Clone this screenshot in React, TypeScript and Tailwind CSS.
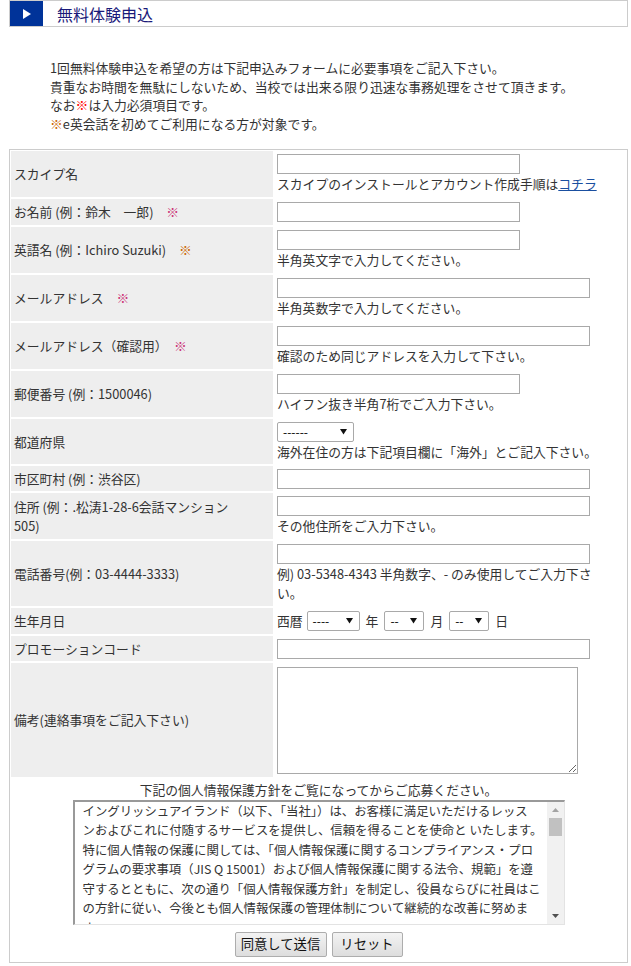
import type { ReactNode } from 'react';

const policyLines = [
  'イングリッシュアイランド（以下、「当社」）は、お客様に満足いただけるレッス',
  'ンおよびこれに付随するサービスを提供し、信頼を得ることを使命と いたします。',
  '特に個人情報の保護に関しては、「個人情報保護に関するコンプライアンス・プロ',
  'グラムの要求事項（JIS Q 15001）および個人情報保護に関する法令、規範」を遵',
  '守するとともに、次の通り「個人情報保護方針」を制定し、役員ならびに社員はこ',
  'の方針に従い、今後とも個人情報保護の管理体制について継続的な改善に努めま',
  'す。',
];

function Row({ label, children, className = 'py-[3px]' }: { label: ReactNode; children: ReactNode; className?: string }) {
  return (
    <>
      <div className="flex items-center bg-[#eeeeee] px-[3px] leading-[19px]">
        <div>{label}</div>
      </div>
      <div className={`bg-white px-[2px] ${className}`}>{children}</div>
    </>
  );
}

function Input({ long }: { long?: boolean }) {
  return (
    <input
      type="text"
      className={`block h-[20px] border border-[#a9a9a9] bg-white ${long ? 'w-[313px]' : 'w-[243px]'}`}
    />
  );
}

function Note({ children }: { children: ReactNode }) {
  return <div className="leading-[20px]">{children}</div>;
}

function Select({ text, width }: { text: string; width: string }) {
  return (
    <span
      className={`inline-flex h-[20px] ${width} items-center justify-between rounded-[2px] border border-[#a9a9a9] bg-white pl-[5px] pr-[6px] text-[12px] leading-none text-black`}
    >
      <span>{text}</span>
      <svg width="7" height="7" viewBox="0 0 7 7">
        <polygon points="0,1 7,1 3.5,6.5" fill="#111" />
      </svg>
    </span>
  );
}

const req = (color: string) => <span className={color}>※</span>;

export default function App() {
  return (
    <div className="w-[631px] bg-white font-['Noto_Sans_CJK_JP',sans-serif] text-[12.8px] text-[#333333]">
      {/* Title bar */}
      <div className="ml-[9px] flex h-[27px] w-[619px] border border-[#cccccc]">
        <div className="flex w-[33px] items-center justify-center bg-[#003399]">
          <svg width="8" height="10" viewBox="0 0 8 10">
            <polygon points="0,0 8,5 0,10" fill="#ffffff" />
          </svg>
        </div>
        <h1 className="ml-[14px] flex items-center text-[16px] text-[#1a1a7a]">無料体験申込</h1>
      </div>

      {/* Intro */}
      <div className="mt-[32px] mb-[15px] pl-[50px] leading-[18.7px]">
        <p>1回無料体験申込を希望の方は下記申込みフォームに必要事項をご記入下さい。</p>
        <p>貴重なお時間を無駄にしないため、当校では出来る限り迅速な事務処理をさせて頂きます。</p>
        <p>
          なお<span className="text-[#ff0000]">※</span>は入力必須項目です。
        </p>
        <p>
          <span className="text-[#cc6600]">※</span>e英会話を初めてご利用になる方が対象です。
        </p>
      </div>

      {/* Form */}
      <div className="ml-[9px] w-[619px] border border-[#cccccc] p-[1px]">
        <div className="grid grid-cols-[262px_351px] gap-[2px]">
          <Row label="スカイプ名">
            <Input />
            <Note>
              スカイプのインストールとアカウント作成手順は
              <a href="#" className="text-[#1a4fa0] underline">
                コチラ
              </a>
            </Note>
          </Row>
          <Row label={<>お名前 (例：鈴木　一郎)　{req('text-[#cc3377]')}</>}>
            <Input />
          </Row>
          <Row label={<>英語名 (例：Ichiro Suzuki)　{req('text-[#cc6600]')}</>}>
            <Input />
            <Note>半角英文字で入力してください。</Note>
          </Row>
          <Row label={<>メールアドレス　{req('text-[#cc3377]')}</>}>
            <Input long />
            <Note>半角英数字で入力してください。</Note>
          </Row>
          <Row label={<>メールアドレス（確認用）　{req('text-[#cc3377]')}</>}>
            <Input long />
            <Note>確認のため同じアドレスを入力して下さい。</Note>
          </Row>
          <Row label="郵便番号 (例：1500046)">
            <Input />
            <Note>ハイフン抜き半角7桁でご入力下さい。</Note>
          </Row>
          <Row label="都道府県">
            <div className="flex">
              <Select text="------" width="w-[77px]" />
            </div>
            <div className="leading-[19px]">海外在住の方は下記項目欄に「海外」とご記入下さい。</div>
          </Row>
          <Row label="市区町村 (例：渋谷区)" className="pt-[3px] pb-[2px]">
            <Input long />
          </Row>
          <Row
            label={
              <>
                住所 (例：.松涛1-28-6会話マンション
                <br />
                505)
              </>
            }
          >
            <Input long />
            <Note>その他住所をご入力下さい。</Note>
          </Row>
          <Row label="電話番号(例：03-4444-3333)">
            <Input long />
            <div className="leading-[19.5px]">
              例) 03-5348-4343 半角数字、- のみ使用してご入力下さ
              <br />
              い。
            </div>
          </Row>
          <Row label="生年月日">
            <div className="flex h-[20px] items-center">
              <span className="mr-[4px]">西暦</span>
              <Select text="----" width="w-[53px]" />
              <span className="mx-[6px]">年</span>
              <Select text="--" width="w-[40px]" />
              <span className="mx-[6px]">月</span>
              <Select text="--" width="w-[40px]" />
              <span className="ml-[6px]">日</span>
            </div>
          </Row>
          <Row label="プロモーションコード" className="pt-[3px] pb-[2px]">
            <Input long />
          </Row>
          <Row label="備考(連絡事項をご記入下さい)" className="pt-[4px] pb-[3px]">
            <textarea className="block h-[107px] w-[301px] border border-[#a9a9a9] bg-white" />
          </Row>
        </div>

        {/* Privacy policy */}
        <p className="pt-[4px] text-center leading-[18.75px]">下記の個人情報保護方針をご覧になってからご応募ください。</p>
        <div className="mx-auto flex h-[125px] w-[492px] border-t-2 border-l-2 border-r border-b border-t-[#999999] border-l-[#999999] border-r-[#e3e3e3] border-b-[#e3e3e3] bg-white">
          <div className="flex-1 overflow-hidden pl-[8px] text-[12.4px] leading-[19.5px]">
            {policyLines.map((line, i) => (
              <div key={i} className="whitespace-nowrap">
                {line}
              </div>
            ))}
          </div>
          <div className="flex w-[17px] flex-col bg-[#f1f1f1]">
            <div className="flex h-[16px] items-center justify-center">
              <svg width="7" height="4" viewBox="0 0 7 4">
                <polygon points="0,4 3.5,0 7,4" fill="#a3a3a3" />
              </svg>
            </div>
            <div className="mx-[2px] h-[18px] bg-[#c1c1c1]" />
            <div className="flex-1" />
            <div className="flex h-[16px] items-center justify-center">
              <svg width="7" height="4" viewBox="0 0 7 4">
                <polygon points="0,0 7,0 3.5,4" fill="#505050" />
              </svg>
            </div>
          </div>
        </div>

        <div className="flex justify-center gap-[5px] pt-[7px] pb-[4px]">
          <button className="h-[25px] w-[92px] rounded-[2px] border border-[#adadad] bg-linear-to-b from-[#f3f3f3] to-[#dddddd] text-[13.33px] leading-none text-[#111111]">
            同意して送信
          </button>
          <button className="h-[25px] w-[71px] rounded-[2px] border border-[#adadad] bg-linear-to-b from-[#f3f3f3] to-[#dddddd] text-[13.33px] leading-none text-[#111111]">
            リセット
          </button>
        </div>
      </div>
    </div>
  );
}
